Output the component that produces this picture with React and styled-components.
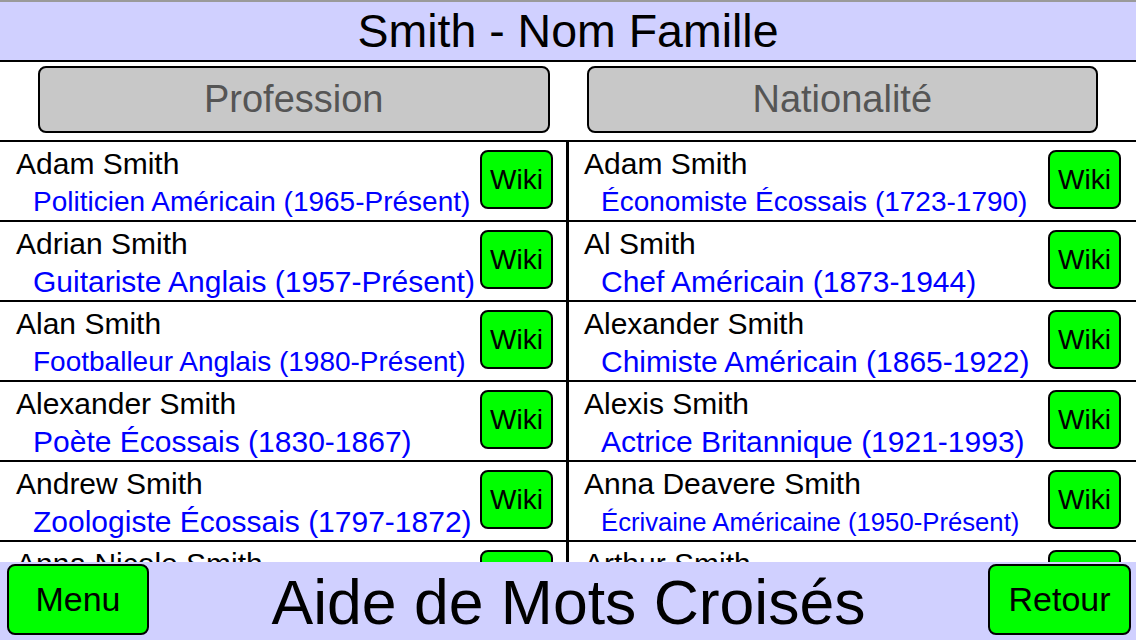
import React from 'react';
import styled, { createGlobalStyle } from 'styled-components';

const GlobalStyle = createGlobalStyle`
  html, body {
    margin: 0;
    padding: 0;
    background: #fff;
  }
  body {
    font-family: "Liberation Sans", Arial, Helvetica, sans-serif;
  }
  * {
    box-sizing: border-box;
  }
`;

const Screen = styled.div`
  width: 1136px;
  height: 640px;
  display: flex;
  flex-direction: column;
  overflow: hidden;
  background: #fff;
`;

const Header = styled.header`
  height: 62px;
  border-top: 2px solid #9a9a9a;
  border-bottom: 2px solid #000;
  background: #d0d0ff;
  display: flex;
  align-items: center;
  justify-content: center;
`;

const Title = styled.h1`
  margin: 0;
  font-size: 46.5px;
  font-weight: normal;
  line-height: 58px;
  color: #000;
`;

const TabRow = styled.div`
  height: 80px;
  border-bottom: 2px solid #000;
  display: flex;
  gap: 37px;
  padding: 4px 38px 0;
`;

const TabButton = styled.button`
  flex: 1;
  height: 67px;
  background: #c8c8c8;
  border: 2px solid #000;
  border-radius: 8px;
  font-family: inherit;
  font-size: 38px;
  line-height: 63px;
  color: #555;
  padding: 0;
`;

const ListArea = styled.div`
  height: 420px;
  overflow: hidden;
  display: flex;
`;

const Column = styled.div`
  width: ${(p) => p.width}px;
  flex: none;
`;

const Divider = styled.div`
  width: 3px;
  flex: none;
  background: #000;
`;

const Row = styled.div`
  height: 80px;
  border-bottom: 2px solid #000;
  display: flex;
  align-items: flex-start;
  padding-left: ${(p) => p.inset}px;
  padding-right: ${(p) => p.trail}px;
`;

const TextBlock = styled.div`
  flex: 1;
  min-width: 0;
  padding-top: 5px;
  white-space: nowrap;
`;

const Name = styled.div`
  font-size: 30px;
  line-height: 34px;
  color: #000;
`;

const Sub = styled.div`
  margin-top: 4px;
  padding-left: 17px;
  font-size: ${(p) => p.size}px;
  line-height: 34px;
  color: #0000ff;
`;

const WikiButton = styled.button`
  flex: none;
  margin-top: 8px;
  width: 73px;
  height: 59px;
  background: #00ff00;
  border: 2px solid #000;
  border-radius: 8px;
  font-family: inherit;
  font-size: 28px;
  color: #000;
  padding: 0;
`;

const BottomBar = styled.footer`
  height: 78px;
  background: #d0d0ff;
  display: flex;
  align-items: flex-start;
  padding: 2px 5px 0 7px;
`;

const NavButton = styled.button`
  flex: none;
  width: ${(p) => p.width}px;
  height: 71px;
  background: #00ff00;
  border: 2px solid #000;
  border-radius: 8px;
  font-family: inherit;
  font-size: 34px;
  color: #000;
  padding: 0;
`;

const AppName = styled.div`
  flex: 1;
  text-align: center;
  font-size: 62.5px;
  line-height: 76px;
  color: #000;
  white-space: nowrap;
`;

// long subtitles are shrunk to fit, as on the device
const left = [
  ['Adam Smith', 'Politicien Américain (1965-Présent)', 28],
  ['Adrian Smith', 'Guitariste Anglais (1957-Présent)', 30],
  ['Alan Smith', 'Footballeur Anglais (1980-Présent)', 28],
  ['Alexander Smith', 'Poète Écossais (1830-1867)', 30],
  ['Andrew Smith', 'Zoologiste Écossais (1797-1872)', 30],
  ['Anna Nicole Smith', 'Mannequin Américaine (1967-2007)', 28],
];

const right = [
  ['Adam Smith', 'Économiste Écossais (1723-1790)', 28],
  ['Al Smith', 'Chef Américain (1873-1944)', 30],
  ['Alexander Smith', 'Chimiste Américain (1865-1922)', 30],
  ['Alexis Smith', 'Actrice Britannique (1921-1993)', 30],
  ['Anna Deavere Smith', 'Écrivaine Américaine (1950-Présent)', 25.7],
  ['Arthur Smith', 'Comédien Anglais (1954-Présent)', 30],
];

const PersonList = ({ items, width, inset, trail }) => (
  <Column width={width}>
    {items.map(([name, sub, size]) => (
      <Row key={name + sub} inset={inset} trail={trail}>
        <TextBlock>
          <Name>{name}</Name>
          <Sub size={size}>{sub}</Sub>
        </TextBlock>
        <WikiButton>Wiki</WikiButton>
      </Row>
    ))}
  </Column>
);

const App = () => {
  return (
    <Screen>
      <GlobalStyle />
      <Header>
        <Title>Smith - Nom Famille</Title>
      </Header>
      <TabRow>
        <TabButton>Profession</TabButton>
        <TabButton>Nationalité</TabButton>
      </TabRow>
      <ListArea>
        <PersonList items={left} width={566} inset={16} trail={13} />
        <Divider />
        <PersonList items={right} width={567} inset={15} trail={15} />
      </ListArea>
      <BottomBar>
        <NavButton width={142}>Menu</NavButton>
        <AppName>Aide de Mots Croisés</AppName>
        <NavButton width={143}>Retour</NavButton>
      </BottomBar>
    </Screen>
  );
};

export default App;
